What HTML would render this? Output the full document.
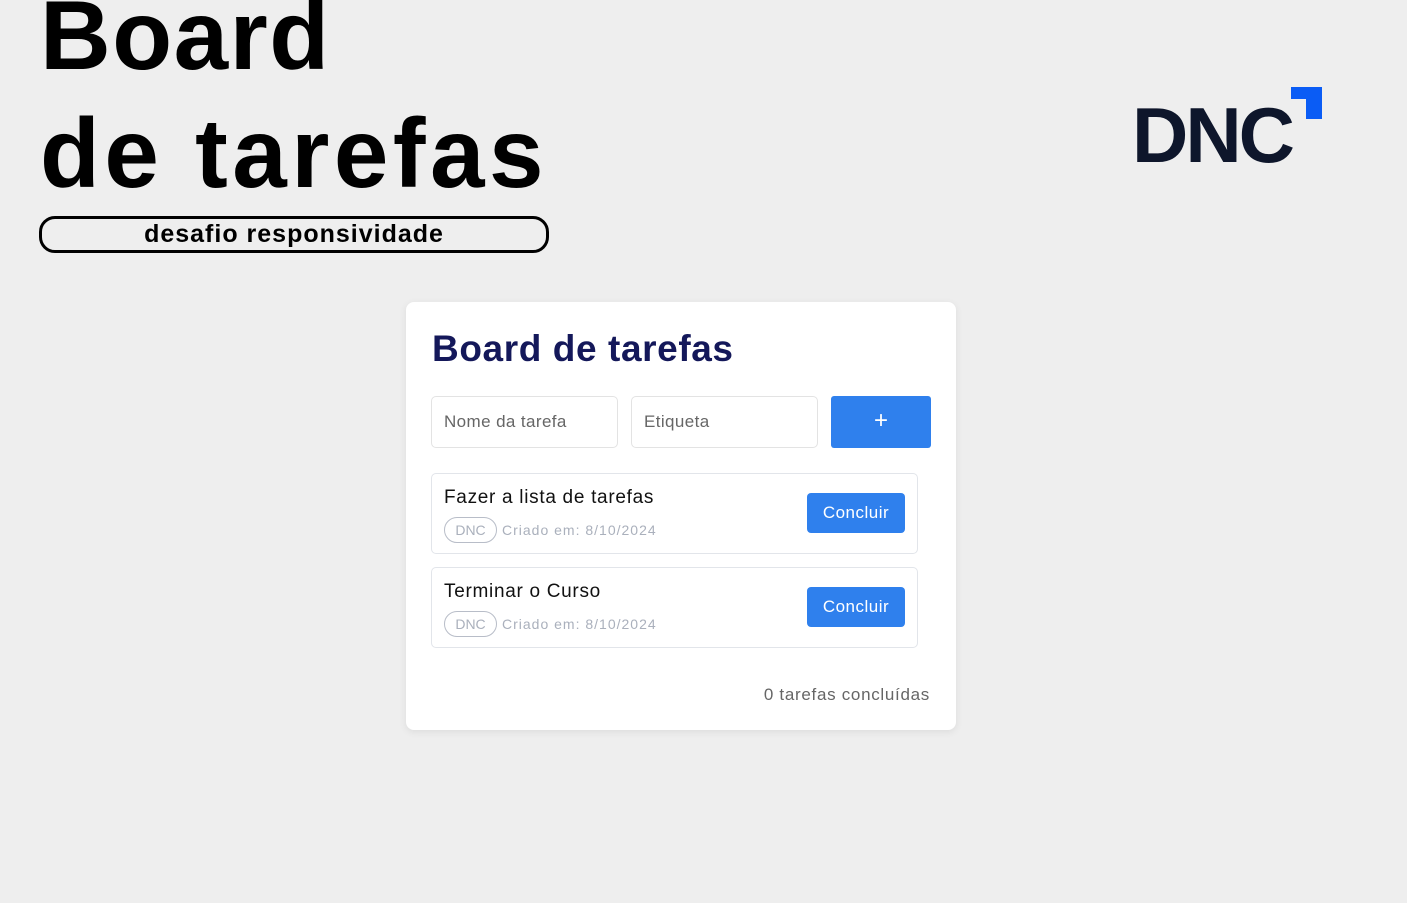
<!DOCTYPE html>
<html><head><meta charset="utf-8"><style>
*{box-sizing:border-box;margin:0;padding:0}
body{width:1407px;height:903px;background:#eeeeee;font-family:"Liberation Sans",sans-serif;position:relative;overflow:hidden}
.h{position:absolute;left:40px;font-weight:bold;font-size:98px;color:#000;line-height:1}
.pill{position:absolute;left:39px;top:216px;width:510px;height:37px;border:3px solid #000;border-radius:16px;text-align:center;font-weight:bold;font-size:25px;line-height:31px;letter-spacing:1px}
.card{position:absolute;left:406px;top:302px;width:550px;height:428px;background:#fff;border-radius:8px;box-shadow:0 2px 8px rgba(0,0,0,.08)}
.ct{position:absolute;left:26px;top:26px;font-size:37px;font-weight:bold;color:#14185a;letter-spacing:0.6px}
.in{position:absolute;top:94px;height:52px;border:1px solid #e3e3e3;border-radius:5px;font-size:17px;color:#666;padding:15px 12px;letter-spacing:0.4px}
.add{position:absolute;left:425px;top:94px;width:100px;height:52px;background:#2f80ed;border-radius:3px;color:#fff;font-size:24px;text-align:center;line-height:50px}
.task{position:absolute;left:25px;width:487px;height:81px;border:1px solid #e2e5ea;border-radius:5px}
.tt{position:absolute;left:12px;top:13px;font-size:19px;color:#111;letter-spacing:0.7px}
.tag{position:absolute;left:12px;top:43px;width:53px;height:26px;border:1px solid #b8bdc8;border-radius:13px;color:#aab0bc;font-size:14px;text-align:center;line-height:24px}
.dt{position:absolute;left:70px;top:48px;font-size:14px;color:#aab0bc;letter-spacing:1px}
.btn{position:absolute;left:375px;top:19px;width:98px;height:40px;background:#2f80ed;border-radius:4px;color:#fff;font-size:17px;text-align:center;line-height:40px;letter-spacing:0.5px}
.ft{position:absolute;right:26px;top:383px;font-size:17px;color:#666;letter-spacing:0.7px}
</style></head><body>
<div class="h" style="top:-14px;letter-spacing:1.5px">Board</div>
<div class="h" style="top:104px;letter-spacing:4.5px">de tarefas</div>
<div class="pill">desafio responsividade</div>
<svg style="position:absolute;left:1130px;top:84px" width="200" height="84">
<text x="2" y="78" font-family="Liberation Sans" font-weight="bold" font-size="78" fill="#0e162b" letter-spacing="-3">DNC</text>
<path d="M161 3H192V35H176V15H161Z" fill="#0a5cf5"/>
</svg>
<div class="card">
<div class="ct">Board de tarefas</div>
<div class="in" style="left:25px;width:187px">Nome da tarefa</div>
<div class="in" style="left:225px;width:187px">Etiqueta</div>
<div class="add">+</div>
<div class="task" style="top:171px"><div class="tt">Fazer a lista de tarefas</div><div class="tag">DNC</div><div class="dt">Criado em: 8/10/2024</div><div class="btn">Concluir</div></div>
<div class="task" style="top:265px"><div class="tt">Terminar o Curso</div><div class="tag">DNC</div><div class="dt">Criado em: 8/10/2024</div><div class="btn">Concluir</div></div>
<div class="ft">0 tarefas concluídas</div>
</div>
</body></html>
